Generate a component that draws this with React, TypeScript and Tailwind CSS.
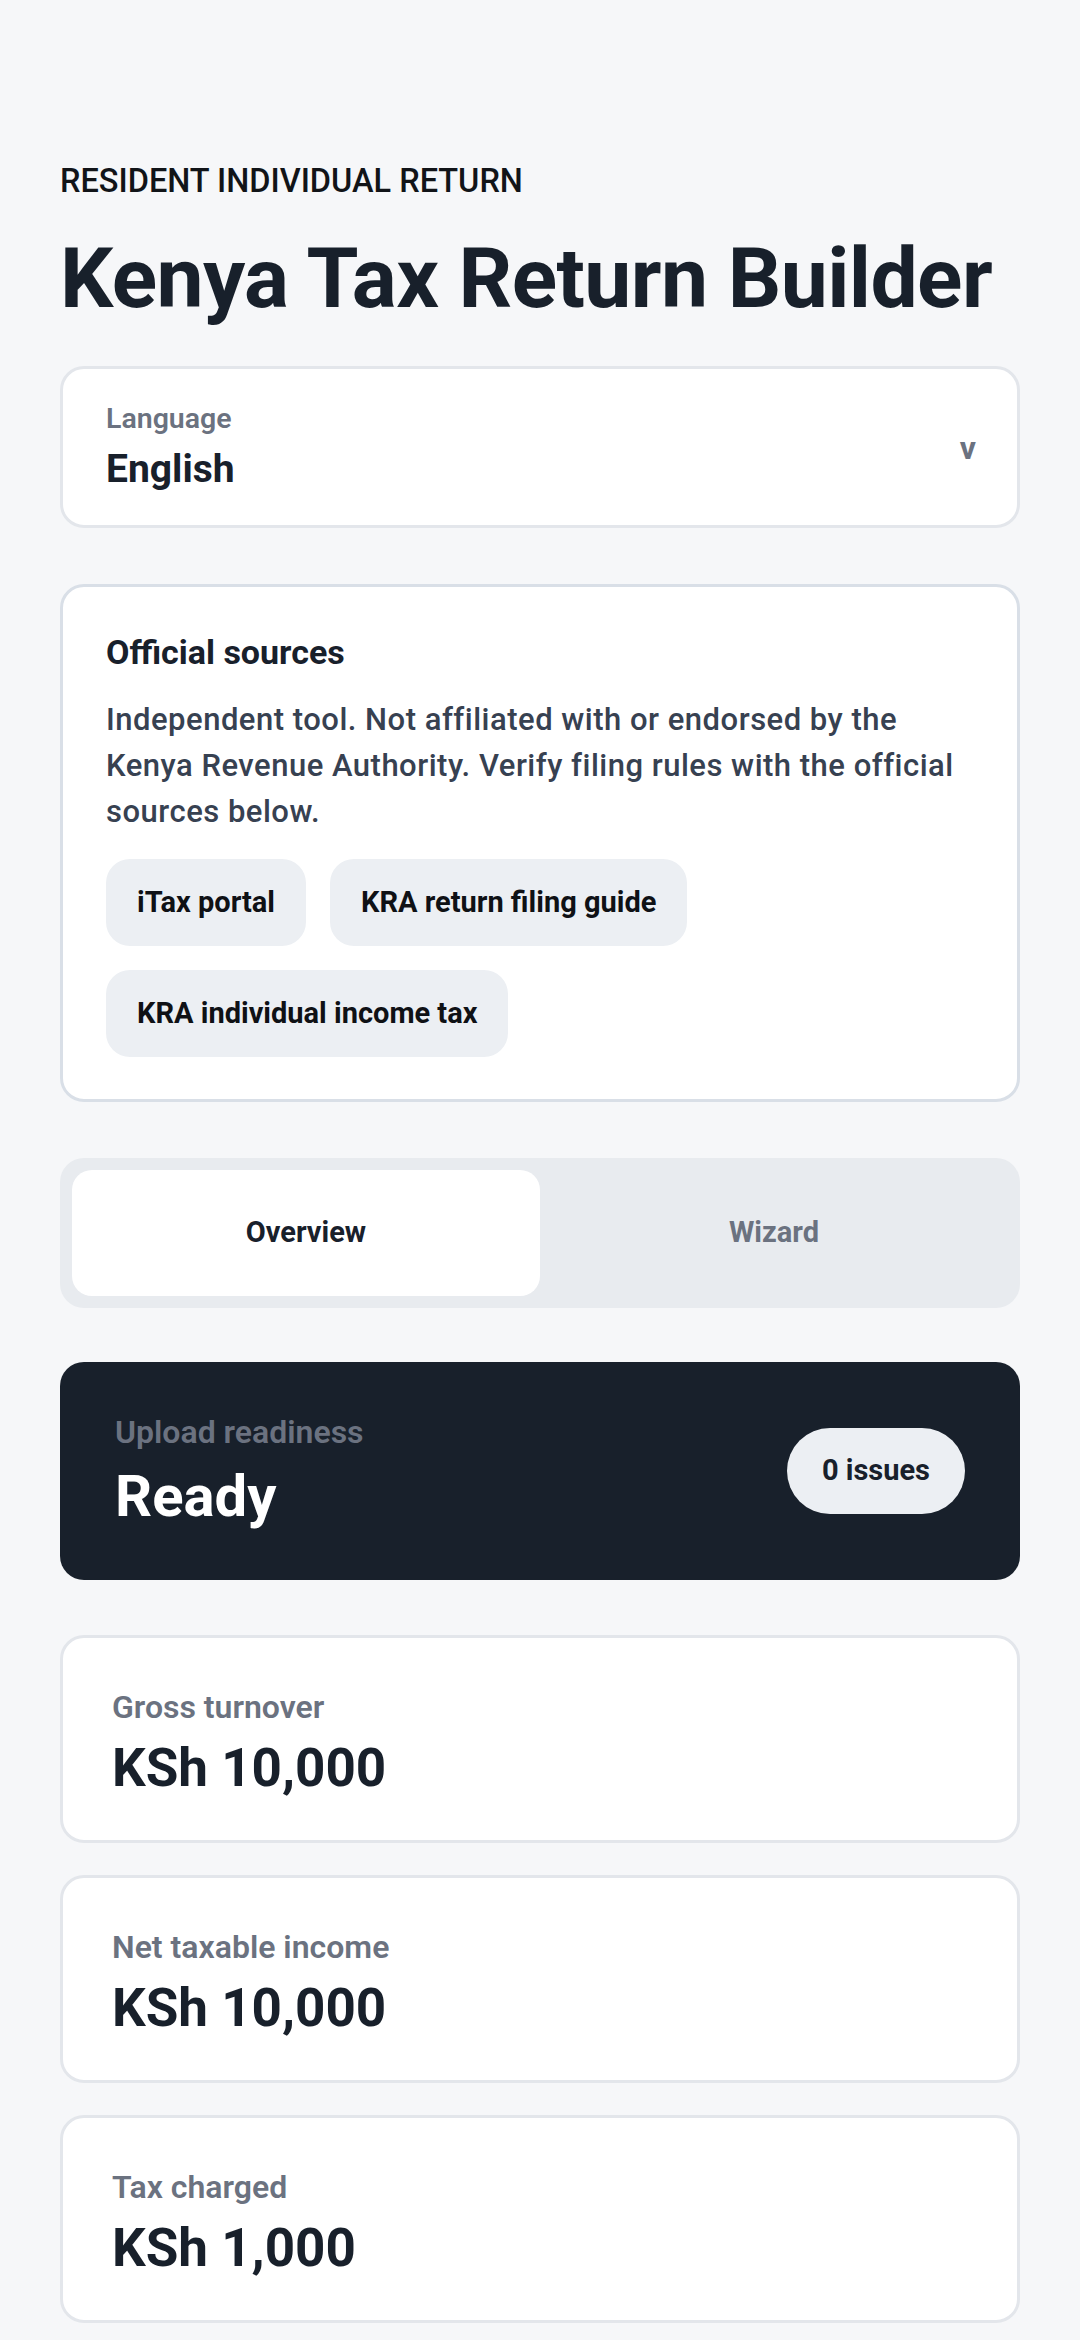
export default function App() {
  const metrics = [
    { label: "Gross turnover", value: "KSh 10,000" },
    { label: "Net taxable income", value: "KSh 10,000" },
    { label: "Tax charged", value: "KSh 1,000" },
  ];
  const chips = ["iTax portal", "KRA return filing guide", "KRA individual income tax"];

  return (
    <div className="min-h-[2340px] bg-[#f6f7f9] [font-family:Roboto,sans-serif] px-[60px] pt-[161px] pb-[80px] text-[#18202b]">
      <p className="text-[32.5px] leading-[40px] font-medium text-[#111418]">RESIDENT INDIVIDUAL RETURN</p>
      <h1 className="mt-[32px] text-[84px] leading-[92px] font-bold tracking-[-0.6px] text-[#18202b]">
        Kenya Tax Return Builder
      </h1>

      <div className="mt-[41px] flex items-center justify-between rounded-[24px] border-[3px] border-[#e3e6eb] bg-white pl-[43px] pr-[41px] pt-[30px] pb-[28px]">
        <div>
          <div className="text-[28.5px] leading-[39px] font-semibold text-[#6b7280]">Language</div>
          <div className="mt-[4px] text-[39px] leading-[55px] font-bold text-[#18202b]">English</div>
        </div>
        <span className="text-[32px] leading-[40px] font-bold text-[#6b7280]">v</span>
      </div>

      <div className="mt-[56px] rounded-[24px] border-[3px] border-[#d9dfe7] bg-white px-[43px] pt-[43px] pb-[42px]">
        <h2 className="text-[34px] leading-[44px] font-bold text-[#18202b]">Official sources</h2>
        <p className="mt-[23px] text-[31px] leading-[46px] font-medium tracking-[0.5px] text-[#374151]">
          Independent tool. Not affiliated with or endorsed by the Kenya Revenue Authority. Verify filing rules with the official sources below.
        </p>
        <div className="mt-[24px] flex flex-wrap gap-[24px]">
          {chips.map((c) => (
            <span
              key={c}
              className="flex h-[87px] items-center rounded-[24px] bg-[#eceff3] px-[31px] text-[29px] font-bold text-[#0f1115]"
            >
              {c}
            </span>
          ))}
        </div>
      </div>

      <div className="mt-[56px] grid grid-cols-2 rounded-[24px] bg-[#e8ebef] p-[12px]">
        <div className="flex h-[126px] items-center justify-center rounded-[20px] bg-white text-[29px] font-bold text-[#18202b]">
          Overview
        </div>
        <div className="flex h-[126px] items-center justify-center rounded-[20px] text-[29px] font-bold text-[#6b7280]">
          Wizard
        </div>
      </div>

      <div className="mt-[54px] flex h-[218px] items-center justify-between rounded-[24px] bg-[#18202b] px-[55px]">
        <div>
          <div className="text-[32px] leading-[42px] font-semibold text-[#6b7280]">Upload readiness</div>
          <div className="mt-[7px] text-[58px] leading-[72px] font-bold text-white">Ready</div>
        </div>
        <span className="flex h-[86px] items-center rounded-full bg-[#eceff3] px-[35px] text-[29px] font-bold text-[#18202b]">
          0 issues
        </span>
      </div>

      <div className="mt-[55px] flex flex-col gap-[32px]">
        {metrics.map((m) => (
          <div
            key={m.label}
            className="rounded-[24px] border-[3px] border-[#e3e6eb] bg-white px-[49px] pt-[48px] pb-[40px]"
          >
            <div className="text-[32px] leading-[42px] font-semibold text-[#6b7280]">{m.label}</div>
            <div className="mt-[8px] text-[53px] leading-[64px] font-bold text-[#18202b]">{m.value}</div>
          </div>
        ))}
      </div>
    </div>
  );
}
